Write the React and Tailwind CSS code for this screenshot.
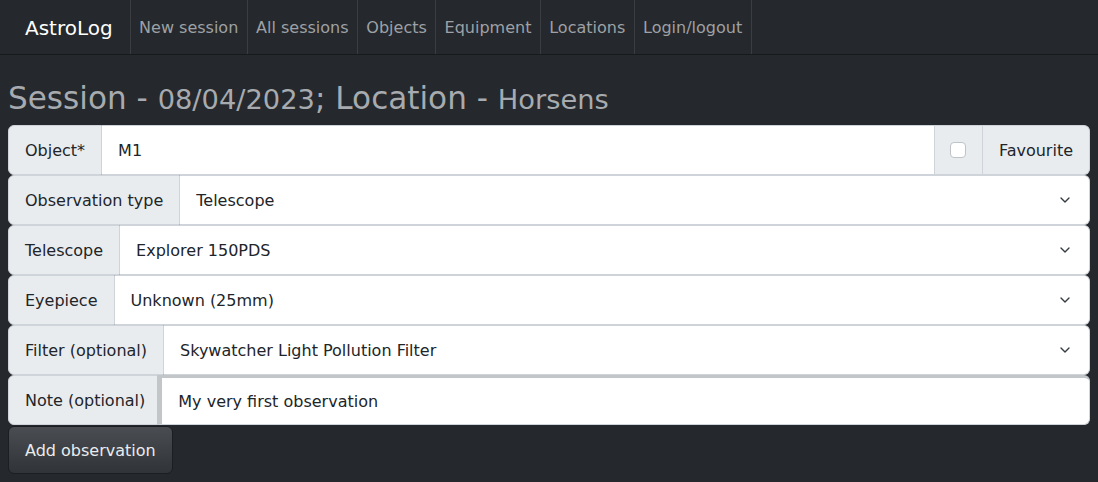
import { ChevronDown } from 'lucide-react';

const navLinks = ["New session", "All sessions", "Objects", "Equipment", "Locations", "Login/logout"];

const selects = [
  ["Observation type", "Telescope"],
  ["Telescope", "Explorer 150PDS"],
  ["Eyepiece", "Unknown (25mm)"],
  ["Filter (optional)", "Skywatcher Light Pollution Filter"],
];

const Label = ({ children }) => (
  <div className="flex items-center pt-[2px] px-4 bg-[#e9ecef] border border-[#ced4da] rounded-l-md whitespace-nowrap">
    {children}
  </div>
);

const App = () => {
  return (
    <div className="min-h-[482px] bg-[#25282c] text-[#212529] text-base" style={{ fontFamily: '"DejaVu Sans", sans-serif' }}>
      {/* navbar */}
      <nav className="flex h-[55px] border-b border-[#17191b] items-stretch">
        <div className="flex items-center pt-[2px] pl-[25px] pr-[17px] text-[20px] text-white">AstroLog</div>
        <div className="flex">
          {navLinks.map((link, i) => (
            <div
              key={link}
              className={"flex items-center pt-[2px] px-[8.4px] border-l border-[#3a3d41] text-[#9ea1a5] " + (i === navLinks.length - 1 ? "border-r" : "")}
            >
              {link}
            </div>
          ))}
        </div>
      </nav>

      <main className="px-2">
        <h2 className="mt-[25px] mb-2 text-[31.1px] leading-[1.2] text-[#a7abaf] whitespace-nowrap">
          Session - <small className="text-[27.3px]">08/04/2023</small>; Location - <small className="text-[27.3px]">Horsens</small>
        </h2>

        <div className="flex h-[50px]">
          <Label>Object*</Label>
          <div className="flex-1 flex items-center pt-[2px] px-4 bg-white border-y border-[#ced4da]">M1</div>
          <div className="flex items-center justify-center w-[49px] bg-[#e9ecef] border border-[#ced4da]">
            <div className="w-4 h-4 rounded bg-white border border-[#bfc3c7]"></div>
          </div>
          <div className="flex items-center pt-[2px] px-4 bg-[#e9ecef] border-y border-r border-[#ced4da] rounded-r-md">Favourite</div>
        </div>

        {selects.map(([label, value]) => (
          <div key={label} className="flex h-[50px]">
            <Label>{label}</Label>
            <div className="flex-1 flex items-center justify-between pl-4 pr-4 bg-white border-y border-r border-[#ced4da] rounded-r-md">
              <span className="pt-[2px]">{value}</span>
              <ChevronDown size={16} strokeWidth={2} className="text-[#343a40]" />
            </div>
          </div>
        ))}

        <div className="flex h-[50px]">
          <Label>Note (optional)</Label>
          <div className="flex-1 flex items-center pt-[2px] ml-[-5px] pl-4 bg-white border-t-[3px] border-l-[5px] border-b border-r border-[#c3c6c9] border-b-[#ced4da] border-r-[#ced4da] rounded-r-md">
            My very first observation
          </div>
        </div>

        <button className="mt-[1px] h-[48px] pt-[2px] px-4 rounded-md border border-[#1c1e21] bg-gradient-to-b from-[#4a4d51] to-[#303337] text-[#e9ecef]">
          Add observation
        </button>
      </main>
    </div>
  );
};

export default App;
